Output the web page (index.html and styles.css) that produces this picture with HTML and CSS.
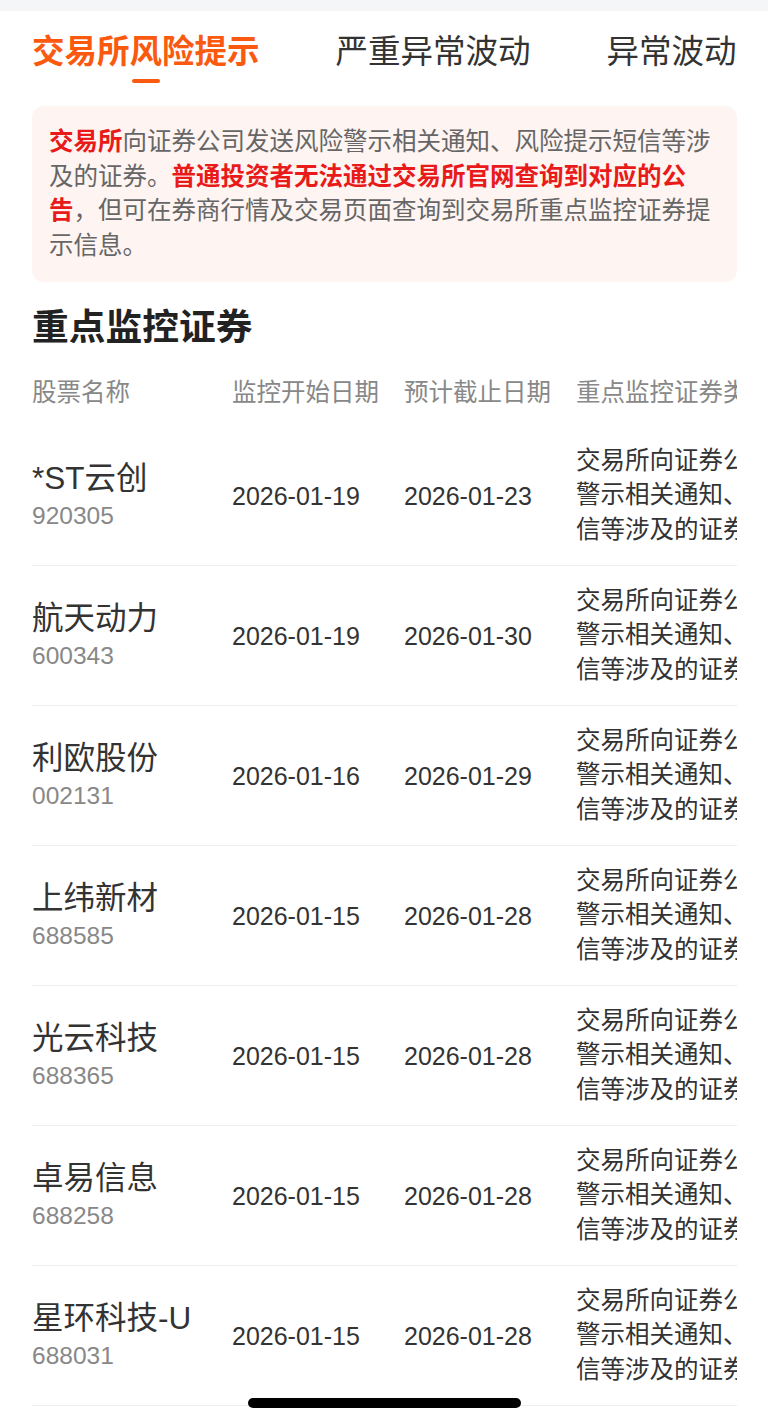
FILE: index.html
```html
<!DOCTYPE html>
<html lang="zh-CN">
<head>
<meta charset="utf-8">
<title>交易所风险提示</title>
<link rel="stylesheet" href="styles.css">
</head>
<body>
<div class="page">
  <div class="status-strip"></div>
  <nav class="tabs">
    <div class="tab active">交易所风险提示<span class="indicator"></span></div>
    <div class="tab">严重异常波动</div>
    <div class="tab">异常波动</div>
  </nav>

  <div class="notice">
    <span class="hl">交易所</span>向证券公司发送风险警示相关通知、风险提示短信等涉及的证券。<span class="hl">普通投资者无法通过交易所官网查询到对应的公告</span>，但可在券商行情及交易页面查询到交易所重点监控证券提示信息。
  </div>

  <h2 class="section-title">重点监控证券</h2>

  <div class="table">
    <div class="thead">
      <div class="c c1">股票名称</div>
      <div class="c c2">监控开始日期</div>
      <div class="c c3">预计截止日期</div>
      <div class="c c4 nowrap">重点监控证券类型</div>
    </div>

    <div class="row">
      <div class="c c1"><div class="name">*ST云创</div><div class="code">920305</div></div>
      <div class="c c2 date">2026-01-19</div>
      <div class="c c3 date">2026-01-23</div>
      <div class="c c4 desc">交易所向证券公司发送风险警示相关通知、风险提示短信等涉及的证券</div>
    </div>
    <div class="row">
      <div class="c c1"><div class="name">航天动力</div><div class="code">600343</div></div>
      <div class="c c2 date">2026-01-19</div>
      <div class="c c3 date">2026-01-30</div>
      <div class="c c4 desc">交易所向证券公司发送风险警示相关通知、风险提示短信等涉及的证券</div>
    </div>
    <div class="row">
      <div class="c c1"><div class="name">利欧股份</div><div class="code">002131</div></div>
      <div class="c c2 date">2026-01-16</div>
      <div class="c c3 date">2026-01-29</div>
      <div class="c c4 desc">交易所向证券公司发送风险警示相关通知、风险提示短信等涉及的证券</div>
    </div>
    <div class="row">
      <div class="c c1"><div class="name">上纬新材</div><div class="code">688585</div></div>
      <div class="c c2 date">2026-01-15</div>
      <div class="c c3 date">2026-01-28</div>
      <div class="c c4 desc">交易所向证券公司发送风险警示相关通知、风险提示短信等涉及的证券</div>
    </div>
    <div class="row">
      <div class="c c1"><div class="name">光云科技</div><div class="code">688365</div></div>
      <div class="c c2 date">2026-01-15</div>
      <div class="c c3 date">2026-01-28</div>
      <div class="c c4 desc">交易所向证券公司发送风险警示相关通知、风险提示短信等涉及的证券</div>
    </div>
    <div class="row">
      <div class="c c1"><div class="name">卓易信息</div><div class="code">688258</div></div>
      <div class="c c2 date">2026-01-15</div>
      <div class="c c3 date">2026-01-28</div>
      <div class="c c4 desc">交易所向证券公司发送风险警示相关通知、风险提示短信等涉及的证券</div>
    </div>
    <div class="row">
      <div class="c c1"><div class="name">星环科技-U</div><div class="code">688031</div></div>
      <div class="c c2 date">2026-01-15</div>
      <div class="c c3 date">2026-01-28</div>
      <div class="c c4 desc">交易所向证券公司发送风险警示相关通知、风险提示短信等涉及的证券</div>
    </div>
  </div>

  <div class="home-indicator"></div>
</div>
</body>
</html>
```

FILE: styles.css
```css
html, body {
  margin: 0;
  padding: 0;
  background: #ffffff;
}

body {
  width: 768px;
  height: 1423px;
  overflow: hidden;
  font-family: "Liberation Sans", "Noto Sans CJK SC", sans-serif;
  color: #333333;
}

.page {
  position: relative;
  width: 768px;
  height: 1423px;
  overflow: hidden;
}

.status-strip {
  height: 11px;
  background: #f5f6f8;
}

.tabs {
  display: flex;
  gap: 76px;
  padding: 21px 32px 0 32px;
  height: 84px;
  box-sizing: border-box;
}

.tab {
  position: relative;
  font-size: 32.5px;
  line-height: 40px;
  color: #333333;
  white-space: nowrap;
}

.tab.active {
  color: #fa5a10;
  font-weight: 600;
}

.indicator {
  position: absolute;
  left: 50%;
  top: 47px;
  width: 28px;
  height: 4px;
  margin-left: -14px;
  border-radius: 2px;
  background: #fa5a10;
}

.notice {
  margin: 11px 31px 0 32px;
  padding: 19px 17px 19px 17px;
  background: #fef4f1;
  border-radius: 12px;
  font-size: 24.5px;
  line-height: 34.5px;
  color: #666666;
}

.notice .hl {
  color: #e81a1a;
  font-weight: 700;
}

.section-title {
  margin: 21px 0 0 32px;
  font-size: 36.75px;
  line-height: 50px;
  font-weight: 700;
  color: #222222;
}

.table {
  margin: 0 31px 0 32px;
  overflow: hidden;
}

.thead {
  display: flex;
  padding: 23px 0 16px 0;
  font-size: 24.5px;
  line-height: 34px;
  color: #888888;
}

.c {
  flex: none;
  box-sizing: border-box;
}

.c1 { width: 200px; }
.c2 { width: 172px; }
.c3 { width: 172px; }
.c4 { width: 300px; }

.nowrap { white-space: nowrap; }

.row {
  display: flex;
  align-items: center;
  height: 140px;
  box-sizing: border-box;
  border-bottom: 1px solid #eeeeee;
  width: 844px;
}

.name {
  font-size: 31.5px;
  line-height: 40px;
  color: #333333;
  white-space: nowrap;
}

.code {
  font-size: 24.5px;
  line-height: 36px;
  color: #888888;
}

.date {
  font-size: 25px;
  line-height: 34px;
  color: #333333;
}

.desc {
  font-size: 24.5px;
  line-height: 34.5px;
  color: #333333;
}

.home-indicator {
  position: absolute;
  left: 248px;
  bottom: 15px;
  width: 273px;
  height: 10px;
  border-radius: 5px;
  background: #000000;
}
```
